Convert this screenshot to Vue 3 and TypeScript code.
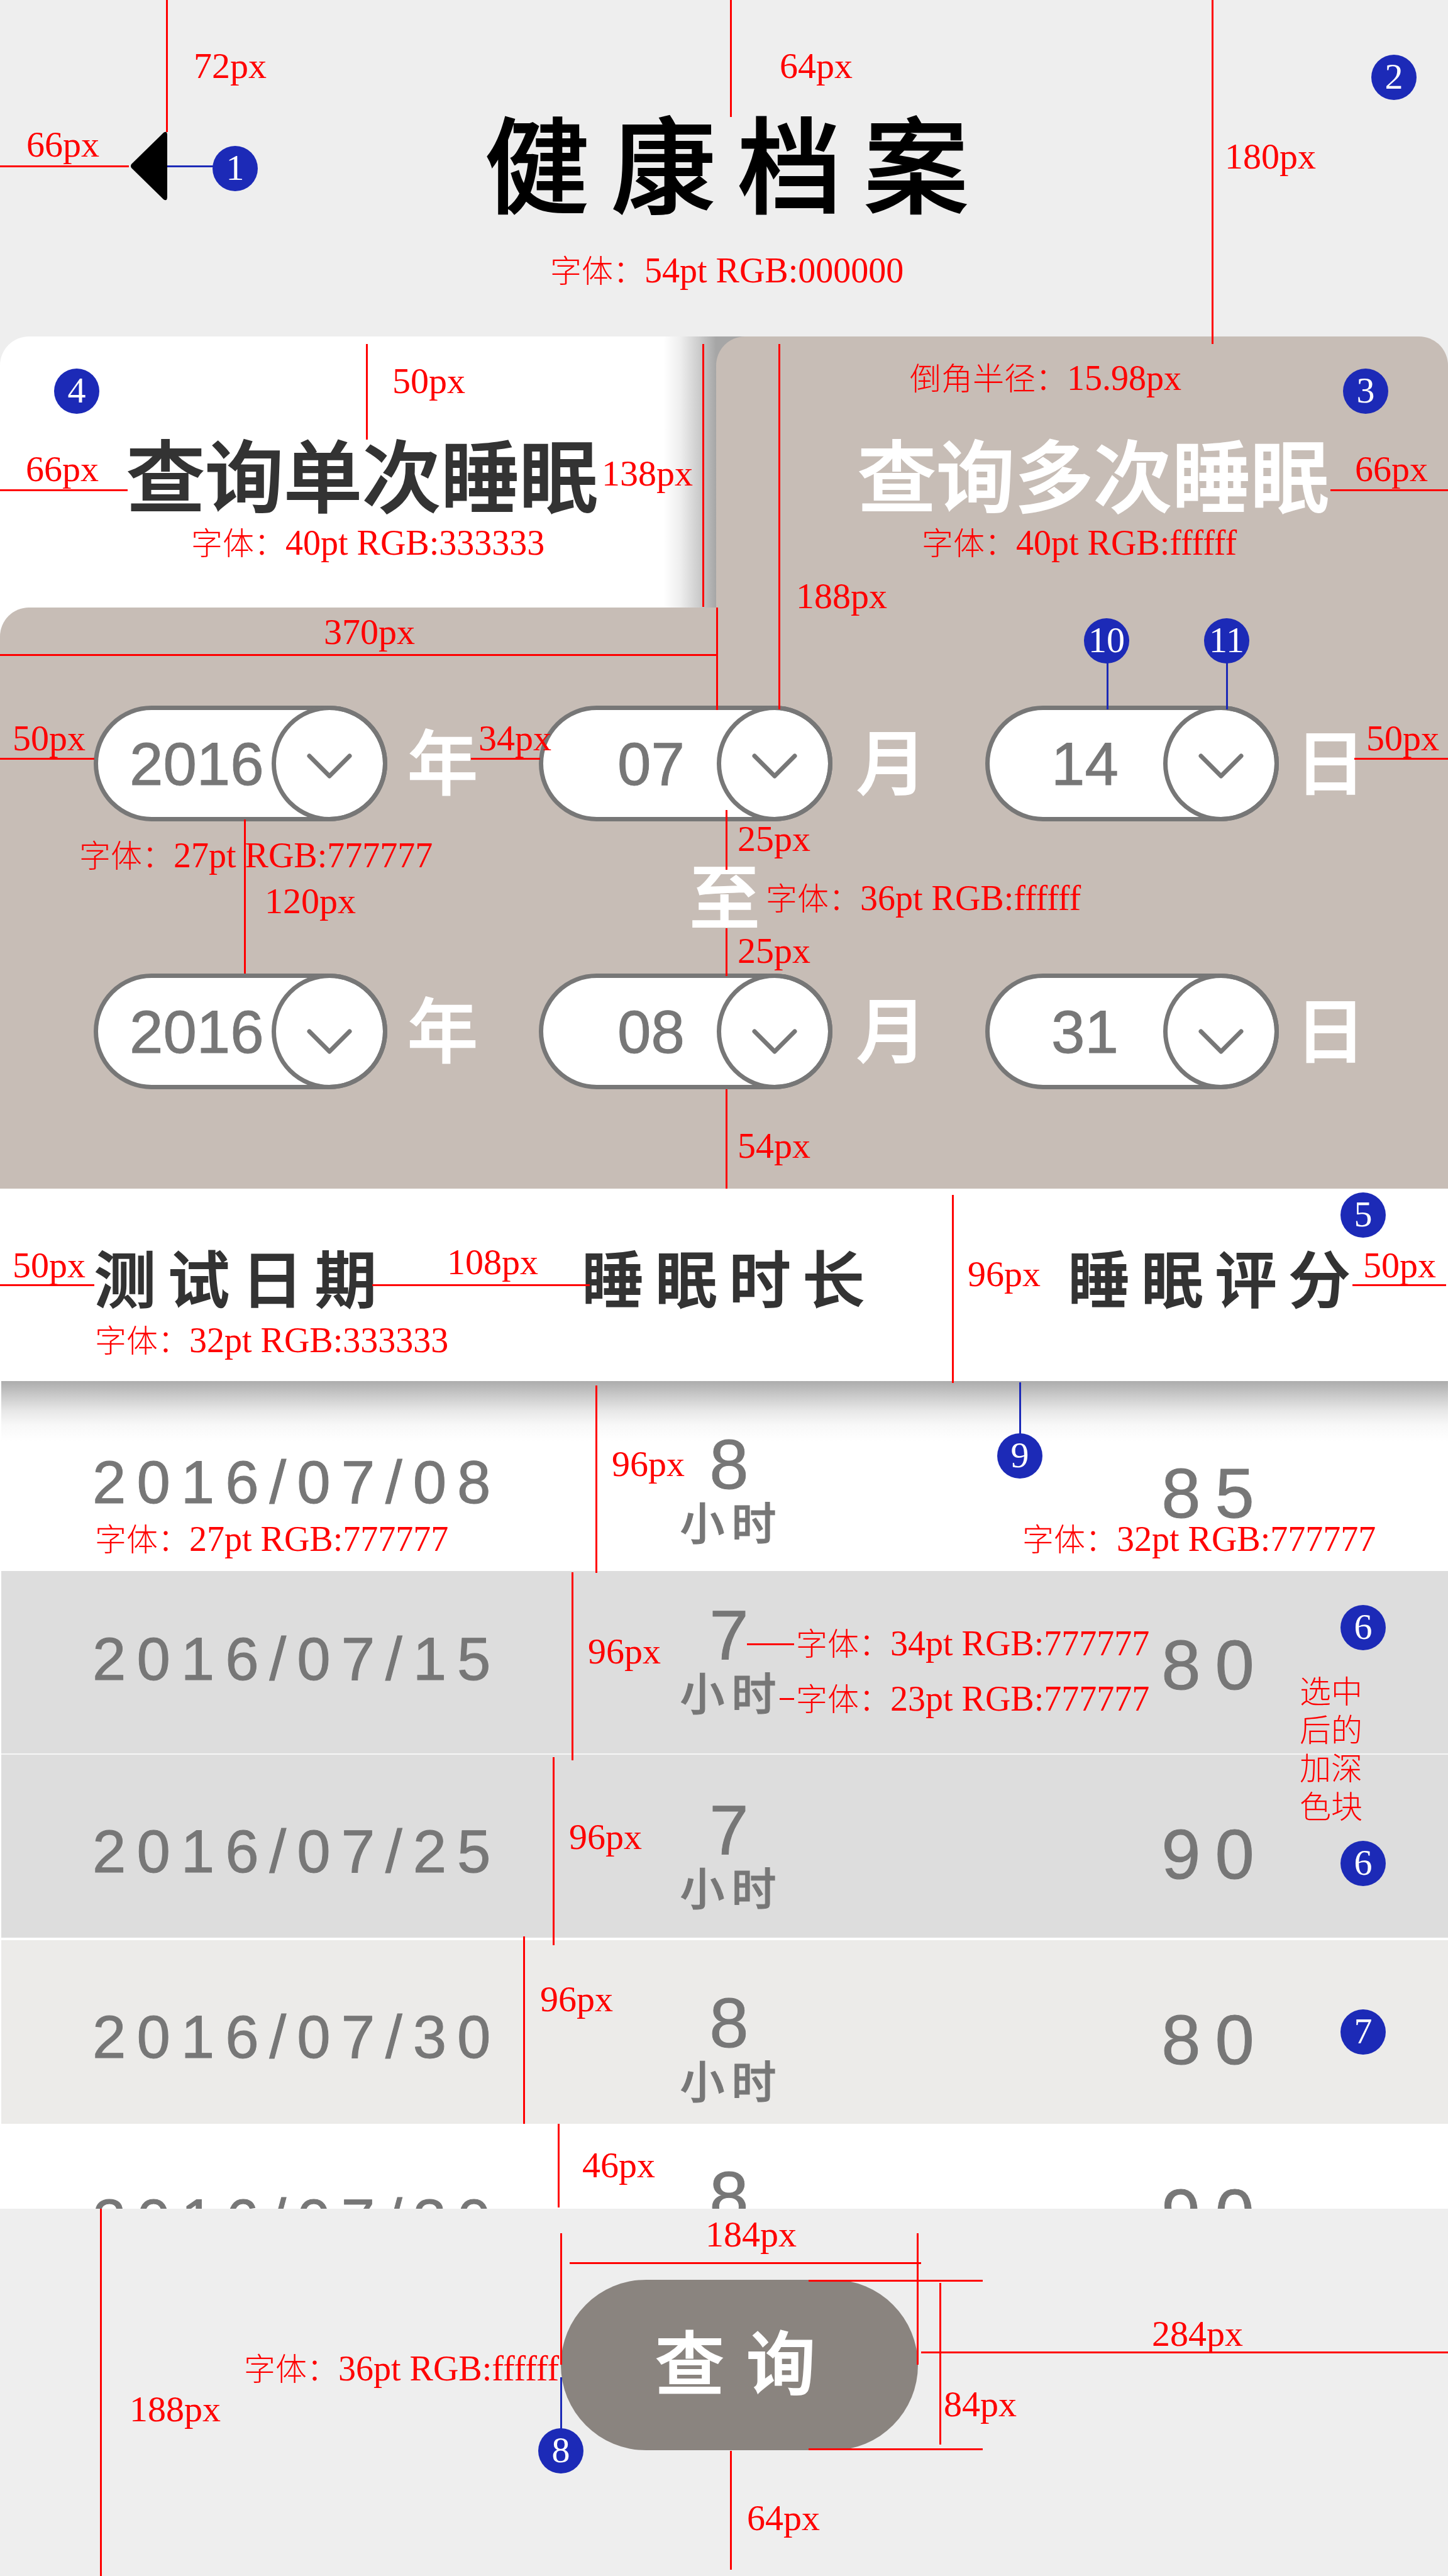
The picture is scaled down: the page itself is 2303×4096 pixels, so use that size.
<script setup lang="ts">
import { h, ref, type FunctionalComponent } from 'vue'

/* Width of the design board; horizontal spec positions are stored against it. */
const BOARD = 2303
const pct = (x: number): string => `${(x / BOARD) * 100}%`

type Mark =
  | { kind: 'v'; x: number; y: number; to: number; blue?: boolean }
  | { kind: 'h'; x: number; y: number; to: number; blue?: boolean }
  | { kind: 'size'; x: number; y: number; text: string }
  | { kind: 'note'; x: number; y: number; lead: string; text: string }
  | { kind: 'block'; x: number; y: number; text: string }
  | { kind: 'badge'; x: number; y: number; text: string }

const v = (x: number, y: number, to: number, blue = false): Mark => ({ kind: 'v', x, y, to, blue })
const hr = (x: number, to: number, y: number, blue = false): Mark => ({ kind: 'h', x, y, to, blue })
const size = (x: number, y: number, text: string): Mark => ({ kind: 'size', x, y, text })
const note = (x: number, y: number, text: string, lead = '字体：'): Mark => ({ kind: 'note', x, y, lead, text })
const badge = (x: number, y: number, text: string): Mark => ({ kind: 'badge', x, y, text })

const Redlines: FunctionalComponent<{ marks: Mark[] }> = (props) =>
  h(
    'div',
    { class: 'redlines' },
    props.marks.map((m) => {
      const at = { left: pct(m.x), top: `${m.y}px` }
      switch (m.kind) {
        case 'v':
          return h('i', { class: ['rl-v', { blue: m.blue }], style: { ...at, height: `${m.to - m.y}px` } })
        case 'h':
          return h('i', { class: ['rl-h', { blue: m.blue }], style: { ...at, width: pct(m.to - m.x) } })
        case 'note':
          return h('span', { class: 'rl-note', style: at }, [h('span', { class: 'rl-lead' }, m.lead), m.text])
        case 'size':
          return h('span', { class: 'rl-size', style: at }, m.text)
        case 'block':
          return h('span', { class: 'rl-block', style: at }, m.text)
        default:
          return h('b', { class: 'rl-badge', style: at }, m.text)
      }
    }),
  )
Redlines.props = ['marks']

const headerMarks: Mark[] = [
  v(265, 0, 210),
  size(308, 73, '72px'),
  hr(0, 205, 263),
  size(42, 198, '66px'),
  hr(266, 340, 263, true),
  badge(374, 268, '1'),
  v(1162, 0, 186),
  size(1240, 73, '64px'),
  v(1928, 0, 547),
  size(1948, 217, '180px'),
  badge(2217, 123, '2'),
  note(875, 400, '54pt RGB:000000'),
]

const queryMarks: Mark[] = [
  badge(122, 87, '4'),
  v(583, 12, 164),
  size(624, 39, '50px'),
  hr(0, 203, 243),
  size(41, 179, '66px'),
  note(304, 298, '40pt RGB:333333'),
  size(957, 186, '138px'),
  v(1118, 12, 430),
  size(515, 438, '370px'),
  hr(0, 1139, 505),
  v(1140, 431, 594),
  v(1239, 12, 593),
  note(1447, 36, '15.98px', '倒角半径：'),
  badge(2172, 87, '3'),
  size(2155, 179, '66px'),
  hr(2116, 2303, 243),
  note(1466, 298, '40pt RGB:ffffff'),
  size(1266, 381, '188px'),
  v(1761, 510, 593, true),
  v(1951, 510, 593, true),
  badge(1760, 484, '10'),
  badge(1951, 484, '11'),
  size(20, 607, '50px'),
  hr(0, 150, 670),
  size(761, 607, '34px'),
  hr(749, 859, 670),
  size(2173, 607, '50px'),
  hr(2154, 2303, 670),
  note(126, 795, '27pt RGB:777777'),
  v(389, 768, 1013),
  size(421, 866, '120px'),
  v(1155, 753, 848),
  size(1173, 767, '25px'),
  v(1155, 941, 1017),
  size(1173, 945, '25px'),
  note(1218, 863, '36pt RGB:ffffff'),
  v(1155, 1197, 1355),
  size(1173, 1255, '54px'),
]

const tableMarks: Mark[] = [
  size(20, 90, '50px'),
  hr(0, 150, 152),
  hr(592, 938, 152),
  size(711, 85, '108px'),
  note(151, 211, '32pt RGB:333333'),
  v(1515, 10, 309),
  size(1539, 104, '96px'),
  badge(2168, 42, '5'),
  size(2168, 90, '50px'),
  hr(2151, 2300, 152),
  v(948, 313, 611),
  size(973, 406, '96px'),
  note(151, 527, '27pt RGB:777777'),
  v(1622, 308, 390, true),
  badge(1622, 425, '9'),
  note(1626, 527, '32pt RGB:777777'),
  v(910, 610, 909),
  size(935, 704, '96px'),
  v(880, 904, 1203),
  size(905, 999, '96px'),
  v(833, 1189, 1487),
  size(859, 1257, '96px'),
  v(888, 1487, 1620),
  size(926, 1521, '46px'),
  hr(1188, 1263, 723),
  note(1266, 693, '34pt RGB:777777'),
  hr(1240, 1263, 810),
  note(1266, 781, '23pt RGB:777777'),
  badge(2168, 698, '6'),
  { kind: 'block', x: 2067, y: 771, text: '选中后的加深色块' },
  badge(2168, 1073, '6'),
  badge(2168, 1341, '7'),
]

const footerMarks: Mark[] = [
  v(160, 0, 584),
  size(206, 287, '188px'),
  size(1122, 9, '184px'),
  v(892, 39, 248),
  v(1459, 39, 248),
  hr(906, 1465, 85),
  hr(1286, 1563, 113),
  hr(1286, 1563, 381),
  v(1495, 118, 375),
  size(1501, 279, '84px'),
  hr(1465, 2303, 227),
  size(1832, 167, '284px'),
  note(388, 224, '36pt RGB:ffffff'),
  v(892, 268, 350, true),
  badge(892, 385, '8'),
  v(1162, 385, 574),
  size(1188, 460, '64px'),
]

const dates = ref([
  [
    { id: 'from-year', part: 'year', value: '2016', unit: '年' },
    { id: 'from-month', part: 'month', value: '07', unit: '月' },
    { id: 'from-day', part: 'day', value: '14', unit: '日' },
  ],
  [
    { id: 'to-year', part: 'year', value: '2016', unit: '年' },
    { id: 'to-month', part: 'month', value: '08', unit: '月' },
    { id: 'to-day', part: 'day', value: '31', unit: '日' },
  ],
])

const records = [
  { date: '2016/07/08', hours: 8, score: 85 },
  { date: '2016/07/15', hours: 7, score: 80 },
  { date: '2016/07/25', hours: 7, score: 90 },
  { date: '2016/07/30', hours: 8, score: 80 },
  { date: '2016/07/30', hours: 8, score: 90 },
]
</script>

<template>
  <main class="page">
    <header class="header">
      <button class="back" type="button" aria-label="返回">
        <svg viewBox="0 0 59 110" width="59" height="110">
          <path d="M53 2 L2 52 Q0 55 2 58 L53 108 Q59 112 59 104 V6 Q59 -2 53 2Z" />
        </svg>
      </button>
      <h1>健康档案</h1>
      <Redlines :marks="headerMarks" />
    </header>

    <section class="query">
      <div class="tabs" role="tablist">
        <button class="tab tab-single" type="button" role="tab" aria-selected="false">查询单次睡眠</button>
        <button class="tab tab-multi" type="button" role="tab" aria-selected="true">查询多次睡眠</button>
      </div>
      <div class="panel">
        <template v-for="(row, r) in dates" :key="r">
          <p v-if="r === 1" class="until">至</p>
          <div class="dates" :class="{ 'dates-end': r === 1 }">
            <div v-for="field in row" :key="field.id" class="field" :class="field.part">
              <div class="pill">
                <select :id="field.id" v-model="field.value">
                  <option>{{ field.value }}</option>
                </select>
                <span class="knob">
                  <svg viewBox="0 0 72 40" width="72" height="40"><path d="M4 4 L36 36 L68 4" /></svg>
                </span>
              </div>
              <label :for="field.id">{{ field.unit }}</label>
            </div>
          </div>
        </template>
      </div>
      <Redlines :marks="queryMarks" />
    </section>

    <section class="results">
      <div class="list">
        <table>
          <colgroup>
            <col class="col-date" />
            <col class="col-hours" />
            <col />
          </colgroup>
          <thead>
            <tr>
              <th scope="col" class="date">测试日期</th>
              <th scope="col">睡眠时长</th>
              <th scope="col">睡眠评分</th>
            </tr>
          </thead>
          <tbody>
            <tr v-for="(rec, i) in records" :key="i">
              <td class="date">{{ rec.date }}</td>
              <td class="hours">{{ rec.hours }}<span>小时</span></td>
              <td class="score">{{ rec.score }}</td>
            </tr>
          </tbody>
        </table>
      </div>
      <Redlines :marks="tableMarks" />
    </section>

    <footer class="footer">
      <button class="submit" type="button">查询</button>
      <Redlines :marks="footerMarks" />
    </footer>
  </main>
</template>

<style>
body {
  margin: 0;
  background: #eee;
}

.redlines {
  position: absolute;
  inset: 0;
  z-index: 5;
  pointer-events: none;
  color: #f00;
  font-family: 'Liberation Serif', 'Noto Sans CJK SC', serif;
  font-weight: 300;
  line-height: 60px;
}
.redlines > * {
  position: absolute;
  white-space: nowrap;
}
.rl-v {
  width: 3px;
  margin-left: -1px;
  background: #f00;
}
.rl-h {
  height: 3px;
  background: #f00;
}
.redlines > .blue {
  background: #1c2ab7;
}
.rl-size {
  margin-top: 2px;
  font-size: 58px;
}
.rl-note {
  font-size: 56px;
}
.rl-lead {
  font-size: 50px;
}
.redlines > .rl-block {
  width: 100px;
  font-size: 50px;
  line-height: 61px;
  white-space: normal;
}
.rl-badge {
  width: 72px;
  height: 72px;
  margin: -36px 0 0 -36px;
  border-radius: 50%;
  background: #1c2ab7;
  color: #fff;
  font-size: 58px;
  font-weight: 400;
  line-height: 70px;
  text-align: center;
}
</style>

<style scoped>
.page {
  font-family: 'Noto Sans CJK SC', 'Liberation Sans', sans-serif;
  font-weight: 500;
}
/* Interface lettering sits between the medium and bold cuts. */
h1,
.tab,
.field label,
.until,
th,
.submit {
  -webkit-text-stroke: 2px currentColor;
}
.pill select,
td {
  -webkit-text-stroke: 1px currentColor;
}
button,
select {
  border: 0;
  font: inherit;
}

.header {
  position: relative;
  display: grid;
  grid-template-columns: 1fr auto 1fr;
  align-items: center;
  box-sizing: border-box;
  min-height: 535px;
  padding: 171px 0 198px;
}
.back {
  justify-self: start;
  display: flex;
  margin: 20px 0 0 207px;
  padding: 0;
  background: none;
}
h1 {
  margin: 0;
  font-size: 166px;
  font-weight: 500;
  line-height: 166px;
  letter-spacing: 35px;
  padding-left: 43px;
}

.query,
.results,
.footer {
  position: relative;
}
.tabs {
  display: grid;
  grid-template-columns: 1139fr 1164fr;
  height: 431px;
}
.tab {
  position: relative;
  padding: 0 0 0 225px;
  font-size: 125px;
  text-align: left;
  line-height: 125px;
}
.tab-single {
  margin-right: -46px;
  padding-left: 201px;
  border-radius: 46px 0 0 0;
  background: linear-gradient(
    to right,
    #fff calc(100% - 130px),
    #efefef calc(100% - 104px),
    #cdcdcd calc(100% - 74px),
    #a6a6a6 calc(100% - 46px)
  );
  color: #333;
}
.tab-multi {
  z-index: 1;
  border-radius: 46px 46px 0 0;
  background: #c7bdb6;
  color: #fff;
}
/* White backing shows through the rounded corner under the inactive tab. */
.query {
  background: linear-gradient(#fff, #fff) 0 431px / 50% 60px no-repeat;
}
.panel {
  position: relative;
  z-index: 1;
  padding: 156px 131px 158px 149px;
  border-radius: 46px 0 0 0;
  background: #c7bdb6;
}
.dates {
  display: flex;
  justify-content: space-between;
}
.field {
  display: flex;
  align-items: center;
  gap: 32px;
}
.field.month {
  gap: 38px;
  padding-left: 4px;
}
.field.day {
  gap: 26px;
}
.field label,
.until {
  color: #fff;
  font-size: 112px;
  line-height: 112px;
}
.field label {
  padding-bottom: 16px;
}
.until {
  margin: 0;
  padding: 58px 16px 72px 0;
  text-align: center;
}
.pill {
  display: flex;
  box-sizing: border-box;
  width: 467px;
  height: 184px;
  border: 7px solid #777;
  border-radius: 92px;
  background: #fff;
}
.pill select {
  flex: 1;
  min-width: 0;
  padding: 0;
  appearance: none;
  background: none;
  color: #777;
  font-family: 'Liberation Sans', sans-serif;
  font-size: 96px;
  font-weight: 400;
}
.year select {
  padding-left: 50px;
}
.month select {
  padding-left: 118px;
}
.day select {
  padding-left: 98px;
}
.knob {
  display: flex;
  align-items: center;
  justify-content: center;
  box-sizing: border-box;
  width: 184px;
  height: 184px;
  margin: -7px -7px 0 0;
  padding-top: 8px;
  border: 7px solid #777;
  border-radius: 50%;
  pointer-events: none;
}
.dates-end .knob {
  padding-top: 32px;
}
.knob path {
  fill: none;
  stroke: #777;
  stroke-width: 7;
  stroke-linecap: round;
  stroke-linejoin: round;
}

.list {
  max-height: 1622px;
  overflow: hidden;
  border-left: 2px solid #fff;
  background: #fff;
}
table {
  width: 100%;
  table-layout: fixed;
  border-collapse: separate;
  border-spacing: 0;
}
.col-date {
  width: 32.8%;
}
.col-hours {
  width: 35%;
}
th,
td {
  padding: 0;
  white-space: nowrap;
  vertical-align: top;
  text-align: center;
}
th {
  box-sizing: border-box;
  height: 306px;
  padding-top: 89px;
  color: #333;
  font-size: 98px;
  font-weight: 500;
  line-height: 98px;
  letter-spacing: 19px;
}
td {
  box-sizing: border-box;
  height: 292px;
  color: #777;
  font-family: 'Liberation Sans', sans-serif;
  font-size: 112px;
  font-weight: 400;
  line-height: 112px;
}
th.date {
  padding-left: 148px;
  text-align: left;
}
td.date {
  padding-top: var(--date-top, 106px);
  padding-left: 145px;
  font-size: 96px;
  line-height: 96px;
  letter-spacing: 17px;
  text-align: left;
}
td.hours {
  padding-top: var(--hours-top, 64px);
}
td.hours span {
  display: block;
  padding-left: 8px;
  font-family: 'Noto Sans CJK SC', sans-serif;
  font-size: 71px;
  font-weight: 500;
  line-height: 64px;
  letter-spacing: 11px;
}
td.score {
  padding-top: var(--score-top, 103px);
  letter-spacing: 23px;
}
tbody tr:nth-child(1) {
  --date-top: 113px;
  --hours-top: 77px;
  --score-top: 123px;
  background: linear-gradient(#acacac, #cfcfcf 27px, #e8e8e8 48px, #f8f8f8 70px, #fff 96px);
}
tbody tr:nth-child(1) td {
  height: 302px;
}
tbody tr:nth-child(2) {
  --date-top: 92px;
  --hours-top: 46px;
  --score-top: 94px;
  background: #ddd;
}
tbody tr:nth-child(2) td {
  border-bottom: 2px solid #f6f6f6;
}
tbody tr:nth-child(3) {
  background: #ddd;
}
tbody tr:nth-child(3) td {
  height: 295px;
  border-bottom: 4px solid #fff;
}
tbody tr:nth-child(4) {
  --hours-top: 76px;
  background: #ecebe9;
}
tbody tr:nth-child(5) {
  --hours-top: 60px;
  --score-top: 88px;
}

.footer {
  padding: 113px 0 200px;
  text-align: center;
}
.submit {
  width: 568px;
  height: 271px;
  margin-left: 49px;
  padding: 0 0 20px 22px;
  border-radius: 136px;
  background: #8a847f;
  color: #fff;
  font-size: 110px;
  line-height: 110px;
  letter-spacing: 35px;
  vertical-align: top;
}
</style>
